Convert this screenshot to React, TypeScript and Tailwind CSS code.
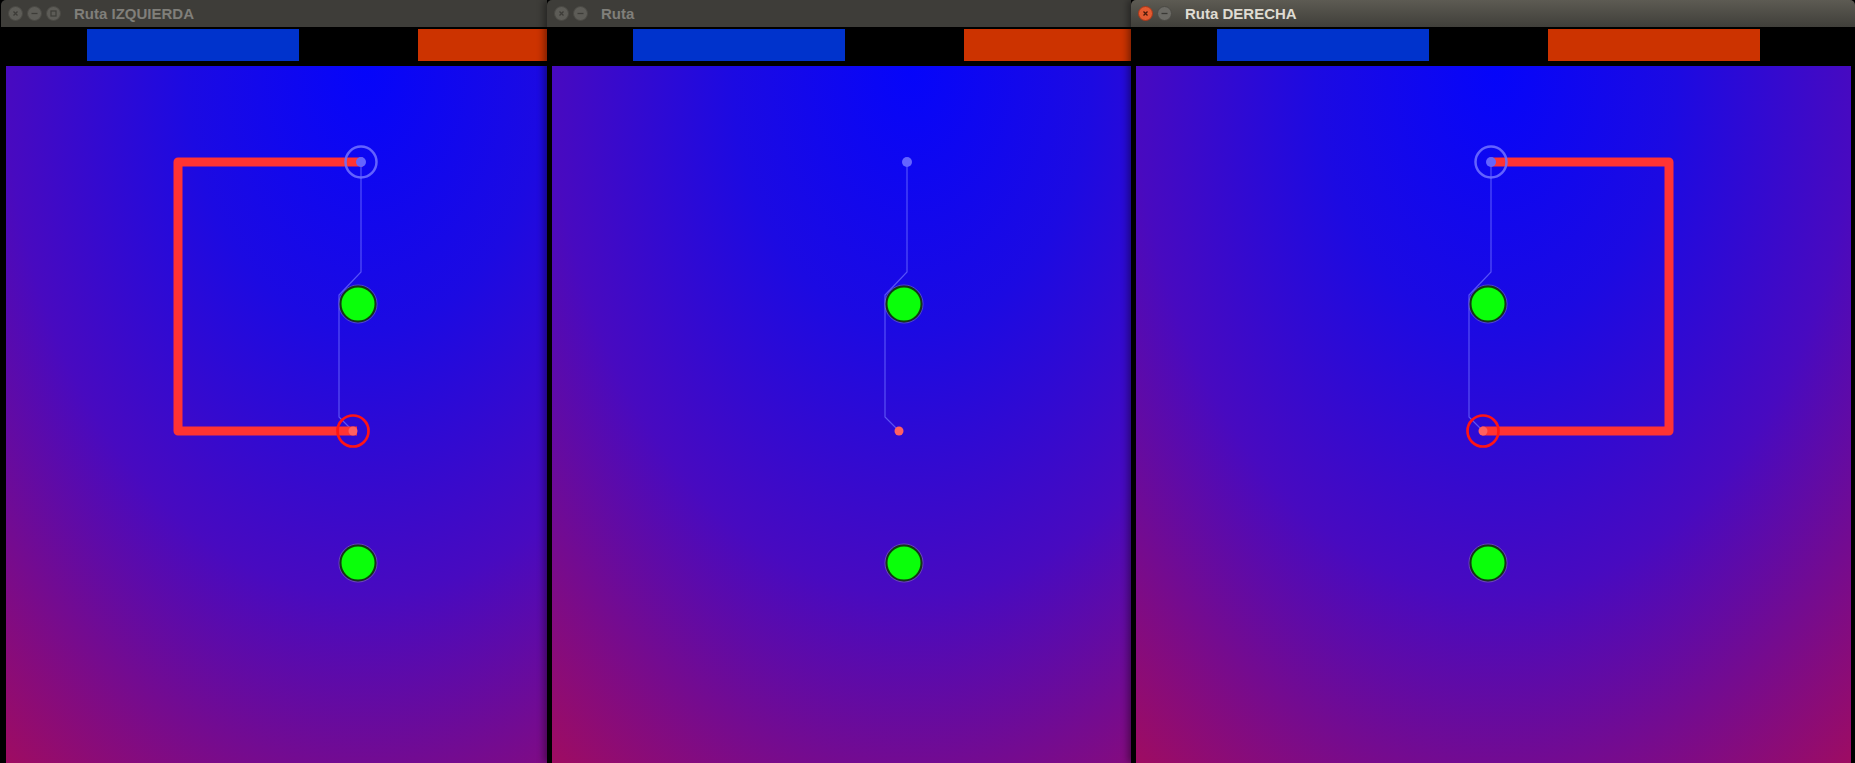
import React from 'react';

type Route = 'left' | 'none' | 'right';

function TitleButton({ kind, active }: { kind: 'close' | 'min' | 'max'; active: boolean }) {
  const isRed = active && kind === 'close';
  return (
    <div
      className={
        'w-[15px] h-[15px] rounded-full flex items-center justify-center border ' +
        (isRed
          ? 'bg-[#e45a30] border-[#a8381a]'
          : active
            ? 'bg-[#6b6a65] border-[#4a4944]'
            : 'bg-[#5d5c57] border-[#4a4944]')
      }
    >
      <svg width="9" height="9" viewBox="0 0 9 9">
        {kind === 'close' && (
          <path d="M2.5 2.5 L6.5 6.5 M6.5 2.5 L2.5 6.5" stroke={isRed ? '#4a1a0a' : '#3d3c38'} strokeWidth="1.3" />
        )}
        {kind === 'min' && <path d="M1.5 4.5 H7.5" stroke={active ? '#3a3935' : '#3d3c38'} strokeWidth="1.3" />}
        {kind === 'max' && <rect x="2" y="2" width="5" height="5" fill="none" stroke="#3d3c38" strokeWidth="1.2" />}
      </svg>
    </div>
  );
}

function Field({ route }: { route: Route }) {
  return (
    <svg width="715" height="697" viewBox="0 0 715 697" className="block">
      {/* planned trajectory */}
      <path
        d="M355 96 V206 L333 229 V351 L347 365"
        fill="none"
        stroke="#7070ff"
        strokeOpacity="0.7"
        strokeWidth="1.2"
      />
      {route === 'left' && (
        <path d="M357 96 H172 V365 H351" fill="none" stroke="#ff3333" strokeWidth="9" strokeLinejoin="round" />
      )}
      {route === 'right' && (
        <path d="M355 96 H533 V365 H346" fill="none" stroke="#ff3333" strokeWidth="9" strokeLinejoin="round" />
      )}
      {route !== 'none' && (
        <>
          <circle cx="355" cy="96" r="15.5" fill="none" stroke="#6d6dff" strokeOpacity="0.9" strokeWidth="2.5" />
          <circle cx="347" cy="365" r="15.5" fill="none" stroke="#ff1414" strokeWidth="2.7" />
        </>
      )}
      <circle cx="355" cy="96" r="5" fill="#6464ff" />
      <circle cx="347" cy="365" r="4.5" fill="#ff6060" />
      {[238, 497].map((cy) => (
        <g key={cy}>
          <circle cx="352" cy={cy} r="19" fill="none" stroke="#9a9a9a" strokeOpacity="0.6" strokeWidth="0.8" />
          <circle cx="352" cy={cy} r="17.5" fill="#0aff0a" stroke="#143814" strokeWidth="2" />
        </g>
      ))}
    </svg>
  );
}

function RouteWindow({ title, route, active, maximize, pos }: { title: string; route: Route; active: boolean; maximize: boolean; pos: string }) {
  return (
    <div className={'absolute top-0 w-[724px] h-[763px] flex flex-col bg-black shadow-[-3px_0_7px_rgba(0,0,0,0.4)] ' + pos}>
      <div
        className={
          'h-[27px] rounded-t-[5px] flex items-center pl-[7px] ' +
          (active ? 'bg-gradient-to-b from-[#5d5b53] to-[#403f3a]' : 'bg-[#3e3d39]')
        }
      >
        <div className="flex gap-[4px]">
          <TitleButton kind="close" active={active} />
          <TitleButton kind="min" active={active} />
          {maximize && <TitleButton kind="max" active={active} />}
        </div>
        <span
          className={
            'ml-[13px] text-[15px] font-bold leading-none ' + (active ? 'text-[#dfdbd2]' : 'text-[#807f7a]')
          }
          style={{ fontFamily: '"Liberation Sans", Arial, sans-serif' }}
        >
          {title}
        </span>
      </div>
      <div className="pl-[5px]">
        <div className="flex pt-[2px] h-[39px]">
          <div className="ml-[81px] w-[212px] h-[32px] bg-[#0033cc]" />
          <div className="ml-[119px] w-[212px] h-[32px] bg-[#cc3300]" />
        </div>
        <div className="w-[715px] h-[697px] bg-[radial-gradient(ellipse_600px_880px_at_360px_0px,#0505fa_0%,#1c0ae2_30%,#480ac0_60%,#a00c60_100%)]">
          <Field route={route} />
        </div>
      </div>
    </div>
  );
}

export default function App() {
  return (
    <div className="relative w-[1855px] h-[763px] overflow-hidden bg-black">
      <RouteWindow title="Ruta IZQUIERDA" route="left" active={false} maximize pos="left-[1px] z-0" />
      <RouteWindow title="Ruta" route="none" active={false} maximize={false} pos="left-[547px] z-10" />
      <RouteWindow title="Ruta DERECHA" route="right" active maximize={false} pos="left-[1131px] z-20" />
    </div>
  );
}
